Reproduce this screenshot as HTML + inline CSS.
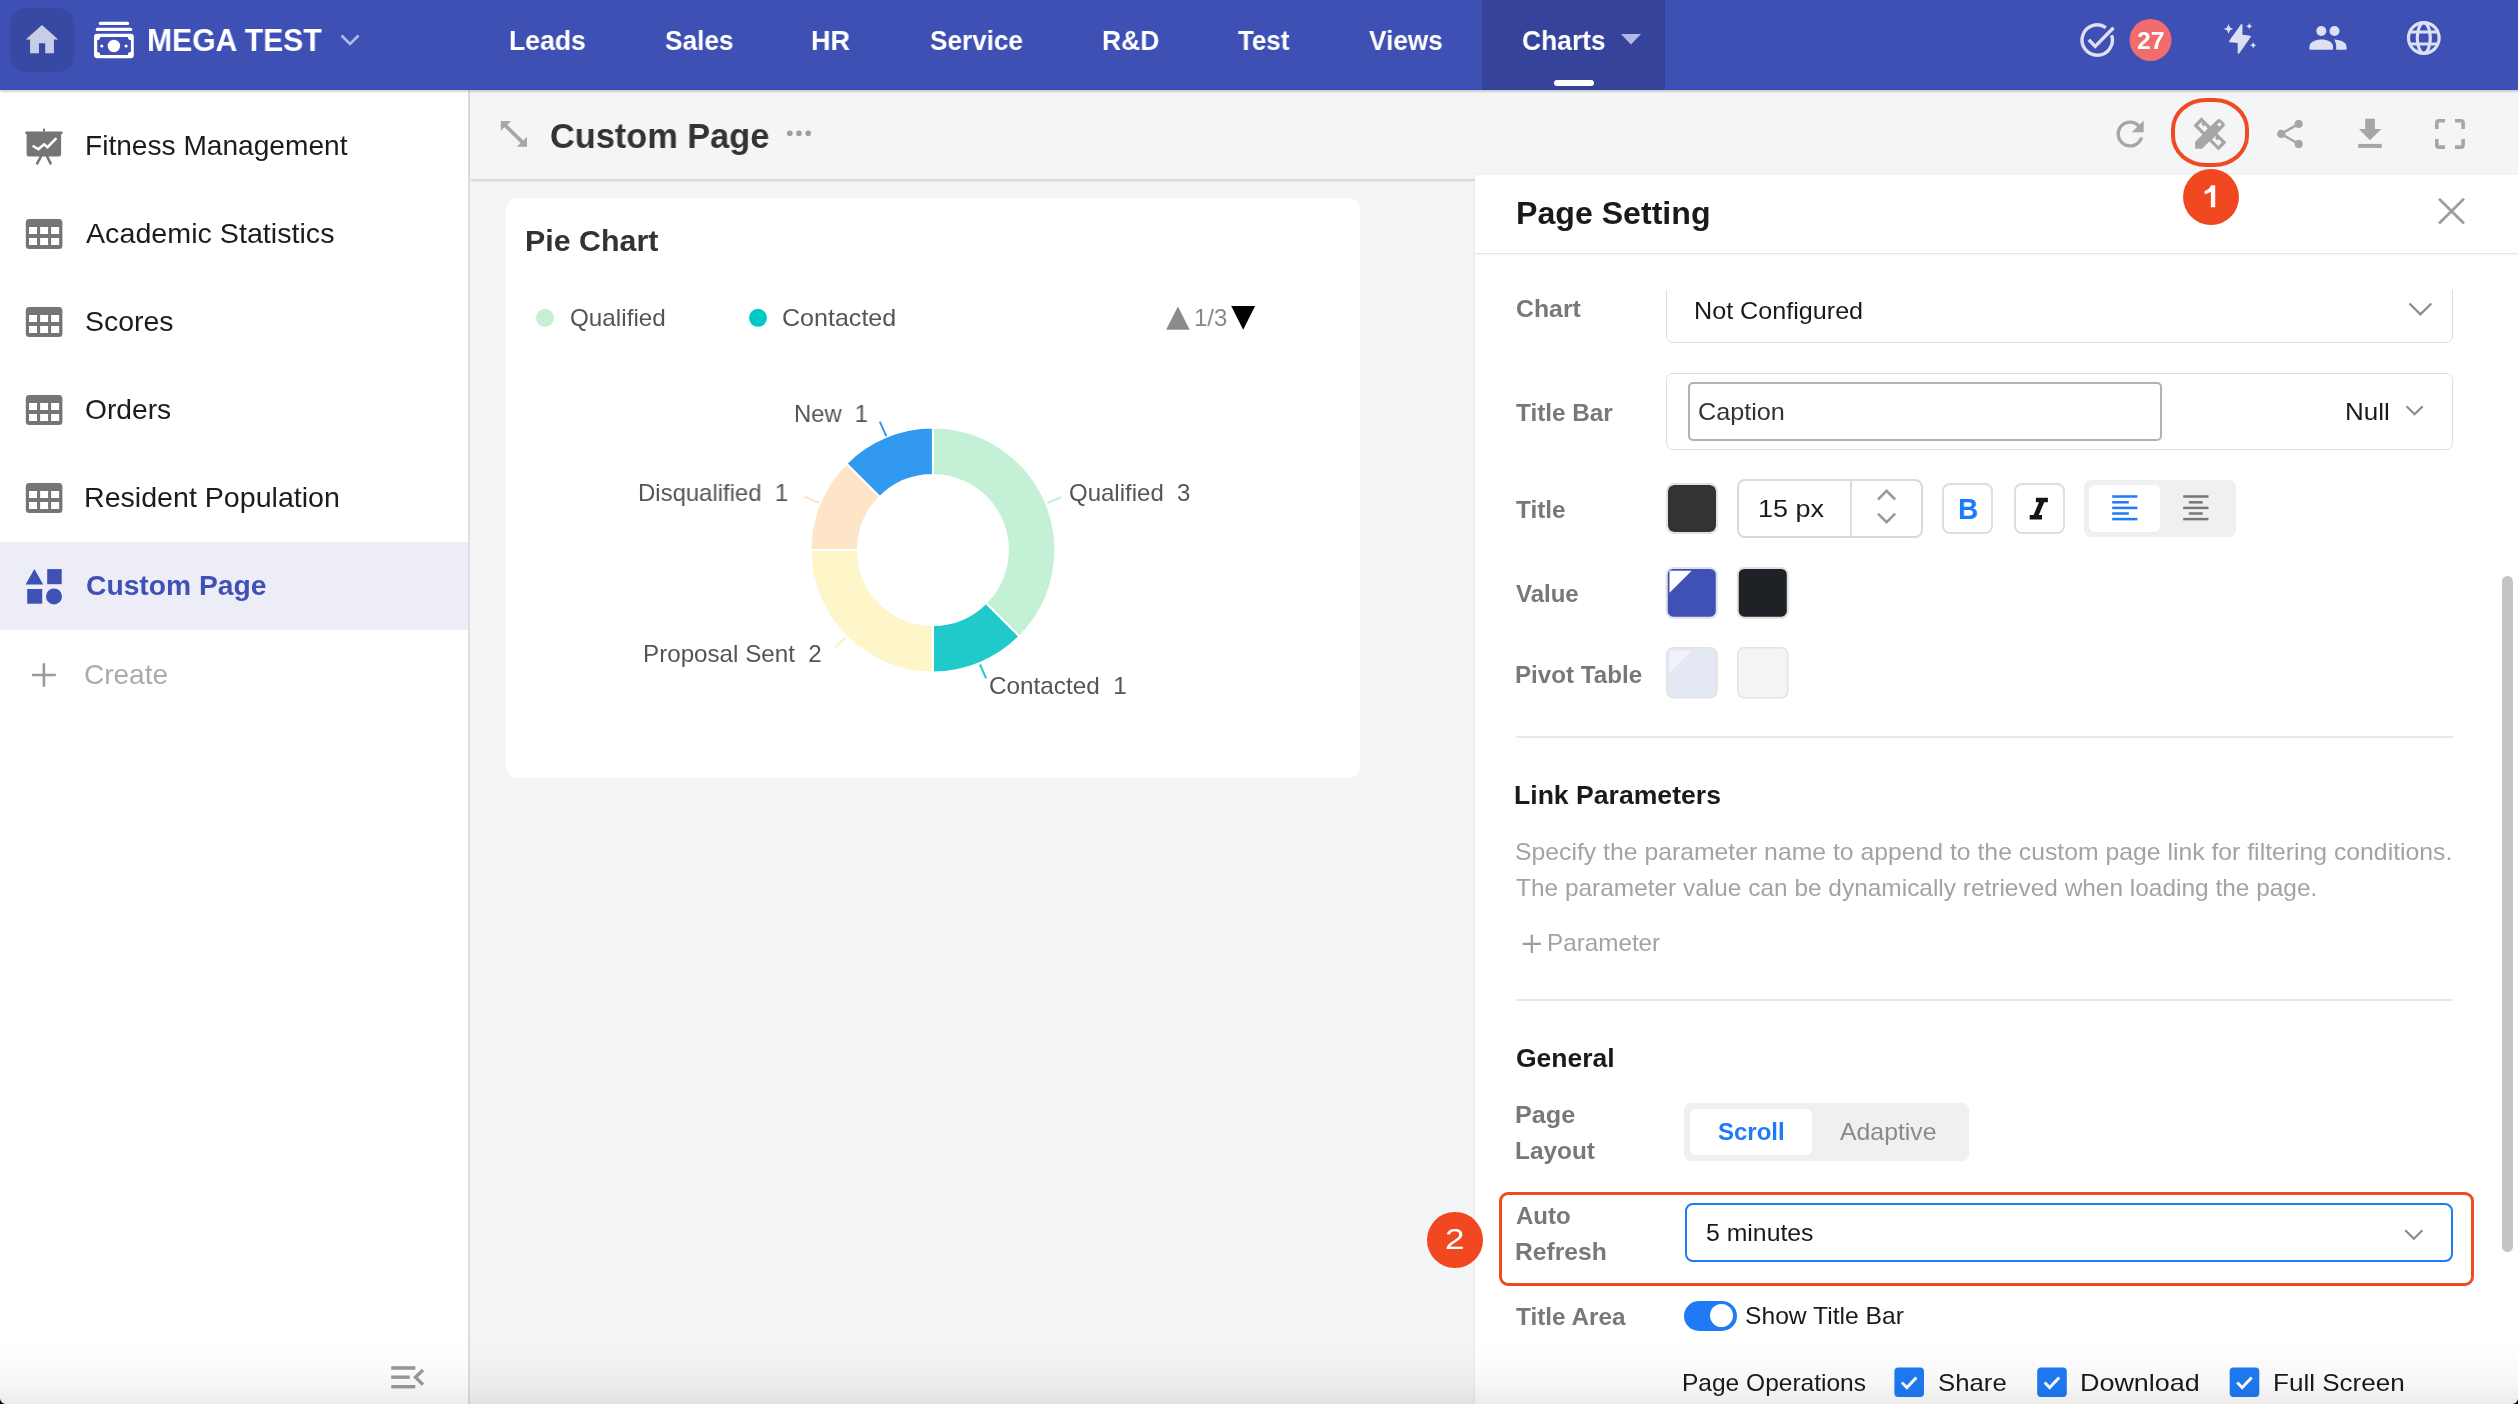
<!DOCTYPE html>
<html><head><meta charset="utf-8">
<style>
*{box-sizing:border-box;margin:0;padding:0}
html,body{width:2518px;height:1404px;overflow:hidden;background:#f4f5f7;font-family:"Liberation Sans",sans-serif}
.a{position:absolute}
.t{position:absolute;line-height:1;white-space:pre;will-change:transform}
svg{position:absolute;overflow:visible}
</style></head><body>
<div class="a" style="left:0;top:0;width:2518px;height:90px;background:#3e50b4;box-shadow:0 1px 3px rgba(0,0,0,.28);z-index:5">
<div class="a" style="left:10px;top:8px;width:64px;height:64px;border-radius:15px;background:#3849a4"></div>
<div class="a" style="left:1482px;top:0;width:183px;height:90px;background:#36439b"></div>
<svg style="left:0;top:0" width="2518" height="90">
<path fill="#c8cde6" d="M42 24.9 L58.2 39.6 L53.9 39.6 L53.9 53.2 L45.2 53.2 L45.2 43.2 L39 43.2 L39 53.2 L30.1 53.2 L30.1 39.6 L25.7 39.6 Z"/>
<rect x="98.8" y="21.8" width="30.4" height="3.3" rx="1.65" fill="#fff"/>
<rect x="95.7" y="27.8" width="36.6" height="3.2" rx="1.6" fill="#fff"/>
<rect x="94" y="33.8" width="39.8" height="24.4" rx="3.2" fill="#fff"/>
<path d="M100.3 37 H127.8 A3.1 3.1 0 0 0 130.9 40.1 V51.9 A3.1 3.1 0 0 0 127.8 55 H100.3 A3.1 3.1 0 0 0 97.2 51.9 V40.1 A3.1 3.1 0 0 0 100.3 37 Z" fill="#3e50b4"/>
<circle cx="113.9" cy="46" r="6.2" fill="#fff"/>
<circle cx="101.8" cy="46" r="1.6" fill="#fff"/>
<circle cx="126.1" cy="46" r="1.6" fill="#fff"/>
<path d="M341.5 35.5 L350 44 L358.5 35.5" fill="none" stroke="#b5bce6" stroke-width="2.6"/>
<path d="M1621 34 L1641 34 L1631 44.5 Z" fill="#b3b9e2"/>
<g fill="none" stroke="#dde0f3" stroke-width="3.4">
  <path d="M2111.66 35.30 A15.2 15.2 0 1 1 2105.92 27.55"/>
  <path d="M2088.8 39.8 L2095.2 46.4 L2113.5 27.8"/>
</g>
<circle cx="2150.5" cy="40" r="21" fill="#f36c6d"/>
<g fill="#dde0f3">
  <path d="M2241.6 25 L2241.5 35.4 L2250 36.6 L2238.6 52.8 L2238.6 42.2 L2230 41.3 Z" stroke="#dde0f3" stroke-width="1.8" stroke-linejoin="round"/>
  <path d="M2228.5 24.099999999999998 L2229.94 27.459999999999997 L2233.3 28.9 L2229.94 30.34 L2228.5 33.699999999999996 L2227.06 30.34 L2223.7 28.9 L2227.06 27.459999999999997 Z"/>
  <path d="M2249.3 23.099999999999998 L2250.23 25.27 L2252.4 26.2 L2250.23 27.13 L2249.3 29.3 L2248.3700000000003 27.13 L2246.2000000000003 26.2 L2248.3700000000003 25.27 Z"/>
  <path d="M2253.2 42.099999999999994 L2254.16 44.339999999999996 L2256.3999999999996 45.3 L2254.16 46.26 L2253.2 48.5 L2252.24 46.26 L2250.0 45.3 L2252.24 44.339999999999996 Z"/>
</g>
<g fill="#dde0f3">
  <circle cx="2321.3" cy="31" r="5"/>
  <circle cx="2334.5" cy="31" r="5"/>
  <path d="M2309.5 49.7 L2309.5 46.5 C2309.5 41.5 2316 39.4 2321.5 39.4 C2327 39.4 2333 41.5 2333 46.5 L2333 49.7 Z"/>
  <path d="M2334 39.5 C2339 39.8 2346.5 41.5 2346.5 46.5 L2346.5 49.7 L2336.2 49.7 L2336.2 46.5 C2336.2 43.5 2335.2 41 2334 39.5 Z"/>
</g>
<g fill="none" stroke="#dde0f3" stroke-width="3.2">
  <circle cx="2423.8" cy="38" r="15.3"/>
  <ellipse cx="2423.8" cy="38" rx="6.5" ry="15.3"/>
  <path d="M2409 32 L2438.6 32 M2409 44 L2438.6 44"/>
</g>
</svg>
<div class="t" style="left:147.26px;top:25.34px;font-size:31px;font-weight:bold;color:#fff;transform:scaleX(0.9724);transform-origin:0 0;">MEGA TEST</div>
<div class="t" style="left:509.20px;top:26.78px;font-size:28px;font-weight:bold;color:#fff;transform:scaleX(0.9499);transform-origin:0 0;">Leads</div>
<div class="t" style="left:664.75px;top:26.78px;font-size:28px;font-weight:bold;color:#fff;transform:scaleX(0.9368);transform-origin:0 0;">Sales</div>
<div class="t" style="left:810.97px;top:26.78px;font-size:28px;font-weight:bold;color:#fff;transform:scaleX(0.9631);transform-origin:0 0;">HR</div>
<div class="t" style="left:930.25px;top:26.78px;font-size:28px;font-weight:bold;color:#fff;transform:scaleX(0.9326);transform-origin:0 0;">Service</div>
<div class="t" style="left:1101.51px;top:26.78px;font-size:28px;font-weight:bold;color:#fff;transform:scaleX(0.9444);transform-origin:0 0;">R&amp;D</div>
<div class="t" style="left:1238.12px;top:26.78px;font-size:28px;font-weight:bold;color:#fff;transform:scaleX(0.9253);transform-origin:0 0;">Test</div>
<div class="t" style="left:1369.21px;top:26.78px;font-size:28px;font-weight:bold;color:#fff;transform:scaleX(0.9355);transform-origin:0 0;">Views</div>
<div class="t" style="left:1521.66px;top:26.78px;font-size:28px;font-weight:bold;color:#fff;transform:scaleX(0.9433);transform-origin:0 0;">Charts</div>
<div class="a" style="left:1554px;top:80px;width:40px;height:6px;border-radius:3px;background:#fff"></div>
<div class="t" style="left:2136.98px;top:28.57px;font-size:24px;font-weight:bold;color:#fff;transform:scaleX(1.0282);transform-origin:0 0;">27</div>
</div>
<div class="a" style="left:0;top:90px;width:470px;height:1314px;background:#fff;border-right:2px solid #dedede"></div>
<div class="a" style="left:0;top:542px;width:468px;height:88px;background:#ededf8"></div>
<div class="t" style="left:84.69px;top:132.48px;font-size:28px;color:#1c1c1c;transform:scaleX(1.0039);transform-origin:0 0;">Fitness Management</div>
<div class="t" style="left:86.00px;top:220.48px;font-size:28px;color:#1c1c1c;transform:scaleX(1.0236);transform-origin:0 0;">Academic Statistics</div>
<div class="t" style="left:84.78px;top:308.48px;font-size:28px;color:#1c1c1c;transform:scaleX(1.0153);transform-origin:0 0;">Scores</div>
<div class="t" style="left:84.79px;top:396.48px;font-size:28px;color:#1c1c1c;transform:scaleX(1.0072);transform-origin:0 0;">Orders</div>
<div class="t" style="left:83.75px;top:484.48px;font-size:28px;color:#1c1c1c;transform:scaleX(1.0211);transform-origin:0 0;">Resident Population</div>
<div class="t" style="left:86.09px;top:572.48px;font-size:28px;font-weight:bold;color:#3f51b5;transform:scaleX(1.0090);transform-origin:0 0;">Custom Page</div>
<div class="t" style="left:83.60px;top:661.48px;font-size:28px;color:#ababab;">Create</div>
<svg style="left:0;top:0" width="470" height="1404">
<g fill="#757575">
<rect x="25.2" y="131.4" width="37.5" height="2.5" rx="1"/>
<rect x="43" y="128.6" width="2" height="3"/>
<rect x="26.6" y="132" width="34.5" height="24.5" rx="2.5"/>
</g>
<path d="M41.2 156 L37.2 163.4 M46.9 156 L50.6 163.4" stroke="#757575" stroke-width="2.6" stroke-linecap="round"/>
<path d="M33.5 146.3 L38.3 149.2 L44.2 144.2 L47.4 147.4 L55.7 138.8" fill="none" stroke="#fff" stroke-width="2.5" stroke-linejoin="round" stroke-linecap="round"/>
<g><rect x="25.8" y="219" width="36.6" height="29.9" rx="3.5" fill="#757575"/><rect x="29" y="227.0" width="8" height="7" fill="#fff"/><rect x="40.1" y="227.0" width="8" height="7" fill="#fff"/><rect x="51.1" y="227.0" width="8" height="7" fill="#fff"/><rect x="29" y="238.0" width="8" height="7" fill="#fff"/><rect x="40.1" y="238.0" width="8" height="7" fill="#fff"/><rect x="51.1" y="238.0" width="8" height="7" fill="#fff"/></g>
<g><rect x="25.8" y="307" width="36.6" height="29.9" rx="3.5" fill="#757575"/><rect x="29" y="315.0" width="8" height="7" fill="#fff"/><rect x="40.1" y="315.0" width="8" height="7" fill="#fff"/><rect x="51.1" y="315.0" width="8" height="7" fill="#fff"/><rect x="29" y="326.0" width="8" height="7" fill="#fff"/><rect x="40.1" y="326.0" width="8" height="7" fill="#fff"/><rect x="51.1" y="326.0" width="8" height="7" fill="#fff"/></g>
<g><rect x="25.8" y="395" width="36.6" height="29.9" rx="3.5" fill="#757575"/><rect x="29" y="403.0" width="8" height="7" fill="#fff"/><rect x="40.1" y="403.0" width="8" height="7" fill="#fff"/><rect x="51.1" y="403.0" width="8" height="7" fill="#fff"/><rect x="29" y="414.0" width="8" height="7" fill="#fff"/><rect x="40.1" y="414.0" width="8" height="7" fill="#fff"/><rect x="51.1" y="414.0" width="8" height="7" fill="#fff"/></g>
<g><rect x="25.8" y="483" width="36.6" height="29.9" rx="3.5" fill="#757575"/><rect x="29" y="491.0" width="8" height="7" fill="#fff"/><rect x="40.1" y="491.0" width="8" height="7" fill="#fff"/><rect x="51.1" y="491.0" width="8" height="7" fill="#fff"/><rect x="29" y="502.0" width="8" height="7" fill="#fff"/><rect x="40.1" y="502.0" width="8" height="7" fill="#fff"/><rect x="51.1" y="502.0" width="8" height="7" fill="#fff"/></g>
<g fill="#3f51b5">
<path d="M34.4 569.1 L43.2 584.5 L25.6 584.5 Z"/>
<rect x="47.2" y="569.1" width="14.5" height="15.1"/>
<rect x="27.2" y="589" width="15" height="14.7"/>
<circle cx="54" cy="596.4" r="8"/>
</g>
<path d="M43.9 663.2 V686.7 M32 675 H55.8" stroke="#9a9a9a" stroke-width="2.6" fill="none"/>
<g fill="#9b9b9b">
<rect x="391.2" y="1366.2" width="24.1" height="3.6"/>
<rect x="391.2" y="1375.5" width="18.6" height="3.4"/>
<rect x="391.2" y="1385" width="24.1" height="3.4"/>
</g>
<path d="M423 1370 L415.5 1377.3 L423 1384.6" fill="none" stroke="#9b9b9b" stroke-width="3.4"/>
</svg>
<div class="a" style="left:470px;top:90px;width:2048px;height:88.5px;background:#f4f5f7;box-shadow:0 1.5px 2px rgba(0,0,0,.13)"></div>
<svg style="left:0;top:0" width="2518" height="240">
<g fill="#a6a8a8">
<path d="M500.8 121 L511 121 L507.3 124.7 L516 133.4 L513.4 136 L504.5 127.3 L500.8 131 Z"/>
<path d="M527 146.7 L516.8 146.7 L520.5 143 L511.8 134.3 L514.4 131.7 L523.3 140.4 L527 136.7 Z"/>
</g>
<g fill="#9d9d9d"><circle cx="789.8" cy="133.2" r="2.8"/><circle cx="799" cy="133.2" r="2.8"/><circle cx="808.2" cy="133.2" r="2.8"/></g>
</svg>
<div class="t" style="left:549.83px;top:117.86px;font-size:35px;font-weight:bold;color:#333;transform:scaleX(0.9806);transform-origin:0 0;">Custom Page</div>
<svg style="left:0;top:0" width="2518" height="240">
<g fill="#a5a7a6">
<path transform="translate(2109.7,113.6) scale(1.7)" d="M17.65 6.35C16.2 4.9 14.21 4 12 4c-4.42 0-7.99 3.58-7.99 8s3.57 8 7.99 8c3.73 0 6.84-2.55 7.73-6h-2.08c-.82 2.33-3.04 4-5.65 4-3.31 0-6-2.69-6-6s2.69-6 6-6c1.66 0 3.14.69 4.22 1.78L13 11h7V4l-2.35 2.35z"/>
<g transform="translate(2185,110)">
<path d="M16.4 7.35 L41.4 32.5 L33.5 40.4 L8.4 15.4 Z"/>
<path d="M10.1 38.8 V31.8 L32 9.9 Q34 8 36 9.9 L38.9 12.8 Q40.8 14.8 38.9 16.8 L17.1 38.8 Z"/>
<g fill="#f4f5f7">
<path d="M34.4 12.3 L36.6 14.5 L34.4 16.7 L32.2 14.5 Z"/>
<path d="M13 15.4 L16.8 12 L17.6 12.8 L16.3 14.1 L18.6 16.4 L19.9 15.1 L22.7 18.6 L19.5 22.1 Z"/>
<path d="M27 29.4 L30.4 26 L31.2 26.8 L29.9 28.1 L32.2 30.4 L33.5 29.1 L36.8 32.3 L33.3 35.9 Z"/>
</g>
</g>
<circle cx="2281.2" cy="133.9" r="4.2"/><circle cx="2298.7" cy="123.9" r="4.2"/><circle cx="2298.7" cy="144" r="4.2"/>
<path d="M2365.2 118.7 H2374.9 V129 H2381.3 L2370 140.2 L2358.8 129 H2365.2 Z"/>
<rect x="2358.2" y="143.9" width="23.6" height="4"/>
</g>
<path d="M2281.2 133.9 L2298.7 123.9 M2281.2 133.9 L2298.7 144" stroke="#a5a7a6" stroke-width="2.4"/>
<g fill="none" stroke="#a5a7a6" stroke-width="3.6">
<path d="M2445 120.7 H2439 Q2436.8 120.7 2436.8 123 V129"/>
<path d="M2455 120.7 H2461 Q2463.1 120.7 2463.1 123 V129"/>
<path d="M2436.8 139 V145 Q2436.8 147.1 2439 147.1 H2445"/>
<path d="M2463.1 139 V145 Q2463.1 147.1 2461 147.1 H2455"/>
</g>
</svg>
<div class="a" style="left:506px;top:198px;width:854px;height:580px;background:#fff;border-radius:12px"></div>
<div class="t" style="left:525.47px;top:225.99px;font-size:30px;font-weight:bold;color:#333;transform:scaleX(1.0131);transform-origin:0 0;">Pie Chart</div>
<svg style="left:0;top:0" width="1400" height="800">
<circle cx="545" cy="317.8" r="9" fill="#c4f0d4"/><circle cx="758" cy="317.8" r="9" fill="#00c8c8"/>
<path d="M1177.9 306.4 L1189.7 329.7 L1166.1 329.7 Z" fill="#8a8a8a"/><path d="M1231.2 306.1 L1255.1 306.1 L1243.2 329.7 Z" fill="#000"/>
<path d="M932.90 427.60 A122.4 122.4 0 0 1 1019.45 636.55 L985.93 603.03 A75 75 0 0 0 932.90 475.00 Z" fill="#c4f1d5" stroke="#fff" stroke-width="2" stroke-linejoin="bevel"/>
<path d="M1019.45 636.55 A122.4 122.4 0 0 1 932.90 672.40 L932.90 625.00 A75 75 0 0 0 985.93 603.03 Z" fill="#20c9ca" stroke="#fff" stroke-width="2" stroke-linejoin="bevel"/>
<path d="M932.90 672.40 A122.4 122.4 0 0 1 810.50 550.00 L857.90 550.00 A75 75 0 0 0 932.90 625.00 Z" fill="#fef5c9" stroke="#fff" stroke-width="2" stroke-linejoin="bevel"/>
<path d="M810.50 550.00 A122.4 122.4 0 0 1 846.35 463.45 L879.87 496.97 A75 75 0 0 0 857.90 550.00 Z" fill="#ffe5c8" stroke="#fff" stroke-width="2" stroke-linejoin="bevel"/>
<path d="M846.35 463.45 A122.4 122.4 0 0 1 932.90 427.60 L932.90 475.00 A75 75 0 0 0 879.87 496.97 Z" fill="#3199f0" stroke="#fff" stroke-width="2" stroke-linejoin="bevel"/>
<g stroke-width="2">
<path d="M879.8 421.6 L886.3 436.2" stroke="#3199f0"/>
<path d="M804.5 496.7 L819 502.8" stroke="#ffe0bd"/>
<path d="M1047.4 503 L1061.4 497" stroke="#c4f1d5"/>
<path d="M834.8 647.6 L845.7 637.4" stroke="#fdf0bb"/>
<path d="M980 664.5 L986.1 678.3" stroke="#20c9ca"/>
</g>
</svg>
<div class="t" style="left:569.79px;top:305.67px;font-size:24px;color:#555;transform:scaleX(1.0109);transform-origin:0 0;">Qualified</div>
<div class="t" style="left:782.35px;top:305.67px;font-size:24px;color:#555;transform:scaleX(1.0440);transform-origin:0 0;">Contacted</div>
<div class="t" style="left:1194.32px;top:305.57px;font-size:24px;color:#888;transform:scaleX(0.9869);transform-origin:0 0;">1/3</div>
<div class="t" style="left:794.02px;top:402.07px;font-size:24px;color:#555;transform:scaleX(0.9916);transform-origin:0 0;">New  1</div>
<div class="t" style="left:637.91px;top:480.67px;font-size:24px;color:#555;transform:scaleX(0.9959);transform-origin:0 0;">Disqualified  1</div>
<div class="t" style="left:1068.50px;top:480.67px;font-size:24px;color:#555;">Qualified  3</div>
<div class="t" style="left:643.39px;top:641.77px;font-size:24px;color:#555;transform:scaleX(1.0075);transform-origin:0 0;">Proposal Sent  2</div>
<div class="t" style="left:989.28px;top:673.67px;font-size:24px;color:#555;transform:scaleX(1.0127);transform-origin:0 0;">Contacted  1</div>
<div class="a" style="left:1475px;top:175px;width:1043px;height:1229px;background:#fff;box-shadow:-1px 0 3px rgba(0,0,0,.04)"></div>
<div class="a" style="left:1475px;top:252.5px;width:1043px;height:1.5px;background:#e4e4e4;box-shadow:0 1px 2px rgba(0,0,0,.06)"></div>
<div class="t" style="left:1515.59px;top:197.10px;font-size:32px;font-weight:bold;color:#1a1a1a;transform:scaleX(1.0037);transform-origin:0 0;">Page Setting</div>
<svg style="left:0;top:0" width="2518" height="1404">
<path d="M2439 198.7 L2464 223.6 M2464 198.7 L2439 223.6" stroke="#9e9e9e" stroke-width="2.8"/>
</svg>
<div class="a" style="left:1475px;top:290px;width:1043px;height:60px;overflow:hidden"><div class="a" style="left:191px;top:-20px;width:787px;height:73px;border:1.5px solid #dcdcdc;border-radius:7px"></div></div>
<div class="t" style="left:1515.97px;top:297.47px;font-size:24px;font-weight:bold;color:#787878;transform:scaleX(1.0342);transform-origin:0 0;">Chart</div>
<div class="t" style="left:1693.51px;top:298.67px;font-size:24px;color:#1a1a1a;transform:scaleX(1.0475);transform-origin:0 0;">Not Configured</div>
<div class="a" style="left:1666px;top:372.5px;width:787px;height:77.5px;border:1.5px solid #dcdcdc;border-radius:7px"></div>
<div class="a" style="left:1688px;top:381.5px;width:474px;height:59px;border:2px solid #b3b1b2;border-radius:5px"></div>
<div class="t" style="left:1516.30px;top:400.67px;font-size:24px;font-weight:bold;color:#787878;transform:scaleX(1.0126);transform-origin:0 0;">Title Bar</div>
<div class="t" style="left:1698.24px;top:400.37px;font-size:24px;color:#333;transform:scaleX(1.0500);transform-origin:0 0;">Caption</div>
<div class="t" style="left:2344.84px;top:400.37px;font-size:24px;color:#1a1a1a;transform:scaleX(1.0822);transform-origin:0 0;">Null</div>
<div class="a" style="left:1666px;top:482.5px;width:51.5px;height:51.5px;border:2px solid #e2e2e2;border-radius:8px;background:#333;background-clip:padding-box"></div>
<div class="a" style="left:1737px;top:478.7px;width:185.6px;height:59px;border:2px solid #dadada;border-radius:8px"></div>
<div class="a" style="left:1850.2px;top:479px;width:1.5px;height:58px;background:#dcdcdc"></div>
<div class="a" style="left:1942.3px;top:482.6px;width:51.2px;height:51.2px;border:2px solid #dedede;border-radius:8px"></div>
<div class="a" style="left:2013.5px;top:482.6px;width:51px;height:51.2px;border:2px solid #dedede;border-radius:8px"></div>
<div class="a" style="left:2084.1px;top:479.7px;width:152.4px;height:57.5px;border-radius:7px;background:#eff0f0"></div>
<div class="a" style="left:2088.8px;top:485.1px;width:71.2px;height:46.8px;border-radius:6px;background:#fff"></div>
<div class="t" style="left:1516.30px;top:497.67px;font-size:24px;font-weight:bold;color:#787878;transform:scaleX(1.0126);transform-origin:0 0;">Title</div>
<div class="t" style="left:1757.98px;top:496.97px;font-size:24px;color:#1a1a1a;transform:scaleX(1.1237);transform-origin:0 0;">15 px</div>
<div class="t" style="left:1958.03px;top:494.29px;font-size:30px;font-weight:bold;color:#1e7bf5;transform:scaleX(0.9344);transform-origin:0 0;">B</div>
<svg style="left:0;top:0" width="2518" height="1404">
<path d="M2409.5 303.5 L2420.4 314.4 L2431.3 303.5" fill="none" stroke="#8c8c8c" stroke-width="2.2"/>
<path d="M2406.5 406.2 L2414.6 414.3 L2422.7 406.2" fill="none" stroke="#8c8c8c" stroke-width="2.2"/>
<path d="M1878 499.5 L1886.6 490.9 L1895.2 499.5 M1878 513.6 L1886.6 522.2 L1895.2 513.6" fill="none" stroke="#9a9a9a" stroke-width="2.6"/>
<path d="M2035.9 497.8 H2047.9 V502.3 H2044.2 L2038.8 515 H2042 V519.6 H2029.7 V515 H2033.6 L2039 502.3 H2035.9 Z" fill="#141414"/>
<rect x="2112.2" y="495.25" width="25.2" height="2.5" fill="#1e7bf5"/><rect x="2183.2" y="495.25" width="25.3" height="2.5" fill="#777"/><rect x="2112.2" y="501.05" width="16.6" height="2.5" fill="#1e7bf5"/><rect x="2188.9" y="501.05" width="13.8" height="2.5" fill="#777"/><rect x="2112.2" y="506.65" width="25.2" height="2.5" fill="#1e7bf5"/><rect x="2183.2" y="506.65" width="25.3" height="2.5" fill="#777"/><rect x="2112.2" y="512.25" width="16.6" height="2.5" fill="#1e7bf5"/><rect x="2188.9" y="512.25" width="13.8" height="2.5" fill="#777"/><rect x="2112.2" y="517.85" width="25.2" height="2.5" fill="#1e7bf5"/><rect x="2183.2" y="517.85" width="25.3" height="2.5" fill="#777"/>
<rect x="1666.75" y="567.95" width="50" height="49.7" rx="6.5" fill="#3f51b5" stroke="#e0e0ea" stroke-width="2"/>
<path d="M1669.5 570.7 L1691.7 570.7 L1669.5 592.8 Z" fill="#fff"/>
<rect x="1737.75" y="567.95" width="50" height="49.7" rx="6.5" fill="#1e2126" stroke="#e0e0e0" stroke-width="2"/>
<rect x="1666.75" y="647.85" width="50.2" height="50" rx="6.5" fill="#e4e8f4" stroke="#e2e2e2" stroke-width="1.5"/>
<path d="M1669.5 650.6 L1691.7 650.6 L1669.5 672.8 Z" fill="#f1f3f9"/>
<rect x="1737.75" y="647.85" width="50" height="50" rx="6.5" fill="#f3f4f5" stroke="#e2e2e2" stroke-width="1.5"/>
</svg>
<div class="t" style="left:1516.40px;top:581.57px;font-size:24px;font-weight:bold;color:#787878;transform:scaleX(0.9935);transform-origin:0 0;">Value</div>
<div class="t" style="left:1514.99px;top:663.07px;font-size:24px;font-weight:bold;color:#787878;transform:scaleX(1.0073);transform-origin:0 0;">Pivot Table</div>
<div class="a" style="left:1516px;top:736px;width:937px;height:2px;background:#e8e8e8"></div>
<div class="a" style="left:1516px;top:998.8px;width:937px;height:2px;background:#e8e8e8"></div>
<div class="t" style="left:1514.29px;top:783.12px;font-size:25px;font-weight:bold;color:#1a1a1a;transform:scaleX(1.0636);transform-origin:0 0;">Link Parameters</div>
<div class="t" style="left:1514.97px;top:840.07px;font-size:24px;color:#a3a3a3;transform:scaleX(1.0317);transform-origin:0 0;">Specify the parameter name to append to the custom page link for filtering conditions.</div>
<div class="t" style="left:1515.59px;top:876.27px;font-size:24px;color:#a3a3a3;transform:scaleX(1.0180);transform-origin:0 0;">The parameter value can be dynamically retrieved when loading the page.</div>
<svg style="left:0;top:0" width="2518" height="1404"><path d="M1531.8 934.8 V953 M1522.7 943.9 H1540.9" stroke="#9c9c9c" stroke-width="2.2"/></svg>
<div class="t" style="left:1547.18px;top:931.37px;font-size:24px;color:#a3a3a3;transform:scaleX(1.0100);transform-origin:0 0;">Parameter</div>
<div class="t" style="left:1515.64px;top:1045.73px;font-size:25px;font-weight:bold;color:#1a1a1a;transform:scaleX(1.0597);transform-origin:0 0;">General</div>
<div class="t" style="left:1515.02px;top:1102.57px;font-size:24px;font-weight:bold;color:#787878;transform:scaleX(1.0510);transform-origin:0 0;">Page</div>
<div class="t" style="left:1515.08px;top:1139.07px;font-size:24px;font-weight:bold;color:#787878;transform:scaleX(1.0156);transform-origin:0 0;">Layout</div>
<div class="a" style="left:1684px;top:1103.4px;width:284.7px;height:57.2px;border-radius:7px;background:#eff0f0"></div>
<div class="a" style="left:1690px;top:1109.1px;width:122.2px;height:46px;border-radius:6px;background:#fff"></div>
<div class="t" style="left:1717.90px;top:1120.47px;font-size:24px;font-weight:bold;color:#1e7bf5;">Scroll</div>
<div class="t" style="left:1839.90px;top:1120.47px;font-size:24px;color:#8a8a8a;transform:scaleX(1.0336);transform-origin:0 0;">Adaptive</div>
<div class="a" style="left:1498.6px;top:1192px;width:975.7px;height:94.3px;border:3.8px solid #f04a23;border-radius:9px"></div>
<div class="a" style="left:1684.5px;top:1203.2px;width:768.7px;height:59.3px;border:2.5px solid #1e7bf5;border-radius:8px"></div>
<div class="t" style="left:1516.10px;top:1203.87px;font-size:24px;font-weight:bold;color:#787878;">Auto</div>
<div class="t" style="left:1515.06px;top:1239.67px;font-size:24px;font-weight:bold;color:#787878;transform:scaleX(1.0278);transform-origin:0 0;">Refresh</div>
<div class="t" style="left:1705.57px;top:1220.57px;font-size:24px;color:#1a1a1a;transform:scaleX(1.0333);transform-origin:0 0;">5 minutes</div>
<div class="a" style="left:1427.2px;top:1212.3px;width:55.5px;height:55.5px;border-radius:50%;background:#f24822"></div>
<div class="a" style="left:2183px;top:169.3px;width:55.8px;height:55.8px;border-radius:50%;background:#f24822;z-index:6"></div>
<div class="a" style="left:2171.3px;top:98px;width:77.7px;height:68.8px;border:4px solid #f04a23;border-radius:35px / 31px"></div>
<div class="t" style="left:1516.30px;top:1305.17px;font-size:24px;font-weight:bold;color:#787878;transform:scaleX(1.0130);transform-origin:0 0;">Title Area</div>
<div class="a" style="left:1683.9px;top:1301px;width:52.8px;height:29.6px;border-radius:15px;background:#1e7bf5"></div>
<div class="a" style="left:1709.8px;top:1304.3px;width:23.2px;height:23.2px;border-radius:50%;background:#fff"></div>
<div class="t" style="left:1745.07px;top:1304.47px;font-size:24px;color:#1a1a1a;transform:scaleX(1.0267);transform-origin:0 0;">Show Title Bar</div>
<div class="t" style="left:1682.46px;top:1370.87px;font-size:24px;color:#1a1a1a;transform:scaleX(1.0214);transform-origin:0 0;">Page Operations</div>
<svg style="left:0;top:0" width="2518" height="1404">
<rect x="1894.4" y="1367.4" width="29.6" height="29.6" rx="4" fill="#1e7bf5"/><path d="M1901.9 1382.5 L1906.9 1387.5 L1916.4 1377.5" fill="none" stroke="#fff" stroke-width="3"/>
<rect x="2037.2" y="1367.4" width="29.6" height="29.6" rx="4" fill="#1e7bf5"/><path d="M2044.7 1382.5 L2049.7 1387.5 L2059.2 1377.5" fill="none" stroke="#fff" stroke-width="3"/>
<rect x="2229.7" y="1367.4" width="29.6" height="29.6" rx="4" fill="#1e7bf5"/><path d="M2237.2 1382.5 L2242.2 1387.5 L2251.7 1377.5" fill="none" stroke="#fff" stroke-width="3"/>
<path d="M2405.3 1230.2 L2413.85 1238.75 L2422.4 1230.2" fill="none" stroke="#8c8c8c" stroke-width="2.2"/>
</svg>
<div class="t" style="left:1938.22px;top:1370.87px;font-size:24px;color:#1a1a1a;transform:scaleX(1.0727);transform-origin:0 0;">Share</div>
<div class="t" style="left:2080.26px;top:1370.87px;font-size:24px;color:#1a1a1a;transform:scaleX(1.1221);transform-origin:0 0;">Download</div>
<div class="t" style="left:2272.83px;top:1370.87px;font-size:24px;color:#1a1a1a;transform:scaleX(1.0849);transform-origin:0 0;">Full Screen</div>
<div class="a" style="left:2502px;top:575.5px;width:11px;height:676px;border-radius:6px;background:#c4c4c4"></div>
<div class="t" style="left:1445.15px;top:1224.29px;font-size:30px;color:#fff;transform:scaleX(1.1679);transform-origin:0 0;">2</div>
<svg style="left:0;top:0;z-index:7" width="2518" height="300"><path d="M2211 185.2 H2215.2 V207.2 H2210.9 V191.8 Q2208.2 193.6 2204.7 194.2 V190.9 Q2209.6 189.6 2211 185.2 Z" fill="#fff"/></svg>
<div class="a" style="left:0;top:1336px;width:2518px;height:68px;background:linear-gradient(to bottom,rgba(0,0,0,0) 0%,rgba(0,0,0,.012) 35%,rgba(0,0,0,.035) 70%,rgba(0,0,0,.075) 100%);z-index:20"></div>
<div class="a" style="left:0;top:1398px;width:6px;height:6px;background:radial-gradient(circle at 100% 0,rgba(0,0,0,0) 5.5px,#000 6.5px);z-index:21"></div>
<div class="a" style="left:2512px;top:1398px;width:6px;height:6px;background:radial-gradient(circle at 0 0,rgba(0,0,0,0) 5.5px,#000 6.5px);z-index:21"></div>
</body></html>
